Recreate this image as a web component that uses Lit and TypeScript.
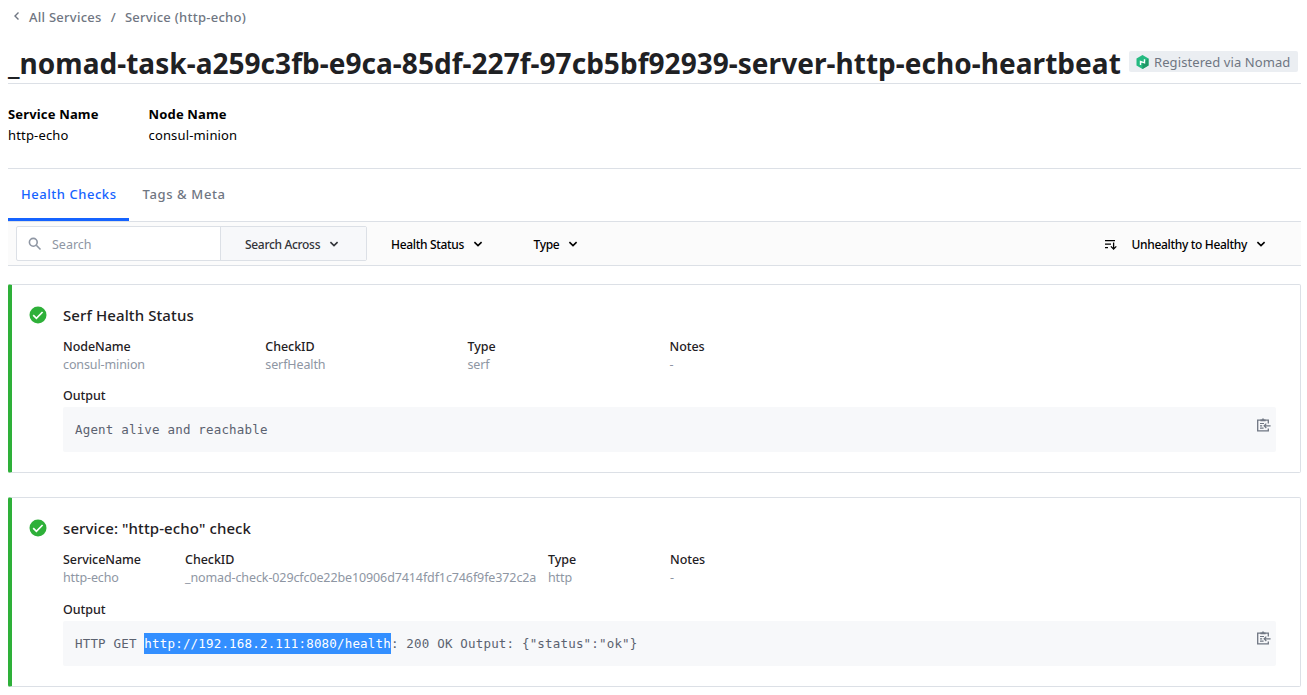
import { LitElement, html, css } from "lit";
import { customElement, property } from "lit/decorators.js";

const chevron = html`<svg width="10" height="10" viewBox="0 0 10 10"><path d="M1.4 3.1 5 6.6 8.6 3.1" fill="none" stroke="currentColor" stroke-width="1.6"/></svg>`;

@customElement("health-check")
class HealthCheck extends LitElement {
  @property() name = "";
  @property() kind = "";
  @property({ attribute: false }) fields: string[][] = [];
  @property({ attribute: false }) output: string[] = [];

  static styles = css`
    :host { display: block; box-sizing: border-box; height: 189px; border: 1px solid #dce0e6; border-left: 4px solid #2eb039; border-radius: 2px; padding: 20px 24px 0 17px; }
    :host([kind="service"]) { height: 190px; }
    .layout { display: grid; grid-template-columns: 34px 1fr; }
    .status { margin-top: 1px; }
    .name { font-size: 15px; line-height: 20px; font-weight: 500; letter-spacing: 0.1px; margin-bottom: 13px; }
    .fields { display: grid; grid-template-columns: 202.3px 202.2px 202px 1fr; height: 49px; }
    .fields.service { grid-template-columns: 122px 363px 122px 1fr; height: 50px; }
    .label { font-size: 12.5px; line-height: 18px; font-weight: 500; letter-spacing: -0.05px; }
    .value { font-size: 12.5px; line-height: 18px; letter-spacing: -0.11px; color: #8e96a3; white-space: nowrap; }
    .code { display: flex; justify-content: space-between; box-sizing: border-box; height: 45px; margin-top: 2px; padding: 12px 5px 0 12px; background: #f7f8fa; border-radius: 2px; font: 12.5px/21px "DejaVu Sans Mono", monospace; letter-spacing: 0.18px; color: #5b6270; white-space: pre; }
    .picked { background: #338fff; color: #fff; display: inline-block; line-height: 21px; }
    .copy { flex: none; margin-top: -2px; }
    :host([kind="service"]) .copy { margin-top: -3px; }
  `;

  render() {
    const [before, picked, after] = this.output;
    return html`<div class="layout">
      <svg class="status" width="18" height="18" viewBox="0 0 18 18"><circle cx="9" cy="9" r="8.5" fill="#2eb039"/><path d="M4.2 9.2 7.4 12.3 13.6 6" fill="none" stroke="#fff" stroke-width="1.7"/></svg>
      <div>
        <div class="name">${this.name}</div>
        <div class="fields ${this.kind}">
          ${this.fields.map(([l, v]) => html`<div><div class="label">${l}</div><div class="value">${v}</div></div>`)}
        </div>
        <div class="label">Output</div>
        <div class="code"><span>${before}${picked ? html`<span class="picked">${picked}</span>` : ""}${after}</span><svg class="copy" width="15" height="16" viewBox="0 0 15 16" fill="none" stroke="#6f7682"><path d="M12.3 6.4V3.2H1.7v10.6h10.6v-2.4" stroke-width="1.3"/><path d="M4.4 3.4h5.2M7 1.5v2" stroke-width="1.6"/><path d="M4 6.5h4M4 8.8h2.2M4 11.2h3.6M14.6 8.8H8.2M10.3 6.6 8.1 8.8l2.2 2.2" stroke-width="1.2"/></svg></div>
      </div>
    </div>`;
  }
}

@customElement("app-root")
class AppRoot extends LitElement {
  static styles = css`
    :host { display: block; box-sizing: border-box; width: 1307px; height: 695px; overflow: hidden; padding: 0 6px 0 8px; background: #fff; color: #1f2124; font-family: "Noto Sans", "Open Sans", sans-serif; }
    .crumbs { display: flex; align-items: center; height: 34px; padding-left: 4px; font-size: 13px; font-weight: 500; letter-spacing: 0.26px; color: #6f7682; }
    .back { margin-right: 8px; margin-bottom: 2px; }
    .slash { margin: 0 9px 0 9px; }
    .title { display: flex; align-items: center; box-sizing: border-box; height: 50px; border-bottom: 1px solid #dce0e6; padding-bottom: 2px; }
    h1 { margin: 10px 0 0; font-size: 28px; line-height: 38px; font-weight: 700; letter-spacing: 0.035px; white-space: nowrap; width: 1121px; flex: none; }
    .badge { display: flex; align-items: center; box-sizing: border-box; width: 169px; height: 21px; margin-top: 8px; padding-left: 7px; gap: 5px; background: #ebeef2; border-radius: 2px; font-size: 13px; letter-spacing: 0.09px; color: #6f7682; white-space: nowrap; }
    .meta { display: grid; grid-template-columns: 140.5px 1fr; box-sizing: border-box; height: 85px; padding-top: 20px; border-bottom: 1px solid #dce0e6; font-size: 13px; line-height: 21px; letter-spacing: 0.16px; color: #000; }
    .meta b { font-weight: 700; }
    .tabs { display: flex; height: 52px; border-bottom: 1px solid #dce0e6; font-size: 13px; font-weight: 500; letter-spacing: 0.56px; color: #6f7682; line-height: 50px; }
    .tab { box-sizing: border-box; height: 52px; padding-left: 13.5px; letter-spacing: 0.63px; }
    .tab.on { width: 121px; padding-left: 13px; letter-spacing: 0.54px; color: #1563ff; border-bottom: 3px solid #1563ff; }
    .bar { display: flex; align-items: center; box-sizing: border-box; height: 44px; padding: 0 35px 0 8px; background: #fbfbfb; border-bottom: 1px solid #dce0e6; font-size: 12px; font-weight: 500; letter-spacing: -0.32px; color: #000; }
    .bar span { padding-top: 2px; }
    .search { display: flex; box-sizing: border-box; width: 351px; height: 35px; border: 1px solid #dce0e6; border-radius: 2px; background: #fff; }
    .input { display: flex; align-items: center; width: 203px; padding-left: 11px; box-sizing: border-box; gap: 10px; font-size: 12.5px; font-weight: 400; letter-spacing: 0; color: #8e96a3; }
    .menu { display: flex; align-items: center; gap: 9px; }
    .across { flex: 1; padding-left: 24px; border-left: 1px solid #dce0e6; background: #f7f8fa; color: #323439; }
    .health { width: 142.5px; margin-left: 24px; }
    .sort { margin-left: auto; }
    .sorticon { margin: 2px 4px 0 0; }
    .list { display: grid; gap: 24px; padding-top: 18px; }
  `;

  render() {
    return html`
      <div class="crumbs"><svg class="back" width="9" height="10" viewBox="0 0 9 10"><path d="M6.5 1.5 3 5l3.5 3.5" fill="none" stroke="currentColor" stroke-width="1.4"/></svg><span>All Services</span><span class="slash">/</span><span>Service (http-echo)</span></div>
      <div class="title"><h1>_nomad-task-a259c3fb-e9ca-85df-227f-97cb5bf92939-server-http-echo-heartbeat</h1>
        <div class="badge"><svg width="13" height="14" viewBox="0 0 13 14"><path d="M6.5 0 12.5 3.5v7L6.5 14 .5 10.5v-7z" fill="#25ba81"/><path d="M12.5 3.5v7L6.5 14V8l3-2z" fill="#1f9967"/><path d="M4.5 10V6.4l4 1.4V4.2" fill="none" stroke="#fff" stroke-width="1.4"/></svg><span>Registered via Nomad</span></div></div>
      <div class="meta"><div><b>Service Name</b><br>http-echo</div><div><b>Node Name</b><br>consul-minion</div></div>
      <div class="tabs"><div class="tab on">Health Checks</div><div class="tab">Tags &amp; Meta</div></div>
      <div class="bar">
        <div class="search"><div class="input"><svg width="14" height="14" viewBox="0 0 14 14" fill="none" stroke="#8e96a3" stroke-width="1.6"><circle cx="5.3" cy="5.3" r="3.9"/><path d="m8.3 8.3 4.2 4.2"/></svg><span>Search</span></div>
          <div class="menu across"><span>Search Across</span>${chevron}</div></div>
        <div class="menu health"><span>Health Status</span>${chevron}</div>
        <div class="menu"><span>Type</span>${chevron}</div>
        <div class="menu sort"><svg class="sorticon" width="14" height="12" viewBox="0 0 14 12" fill="none" stroke="currentColor" stroke-width="1.3"><path d="M1 1.6h10M1 5.1h6M1 8.7h3M9.6 3.5V10M6.9 7.4l2.7 2.7 2.7-2.7"/></svg><span>Unhealthy to Healthy</span>${chevron}</div>
      </div>
      <div class="list">
        <health-check .name=${"Serf Health Status"} .fields=${[["NodeName", "consul-minion"], ["CheckID", "serfHealth"], ["Type", "serf"], ["Notes", "-"]]} .output=${["Agent alive and reachable", "", ""]}></health-check>
        <health-check kind="service" .name=${'service: "http-echo" check'} .fields=${[["ServiceName", "http-echo"], ["CheckID", "_nomad-check-029cfc0e22be10906d7414fdf1c746f9fe372c2a"], ["Type", "http"], ["Notes", "-"]]} .output=${["HTTP GET ", "http://192.168.2.111:8080/health", ': 200 OK Output: {"status":"ok"}']}></health-check>
      </div>`;
  }
}
